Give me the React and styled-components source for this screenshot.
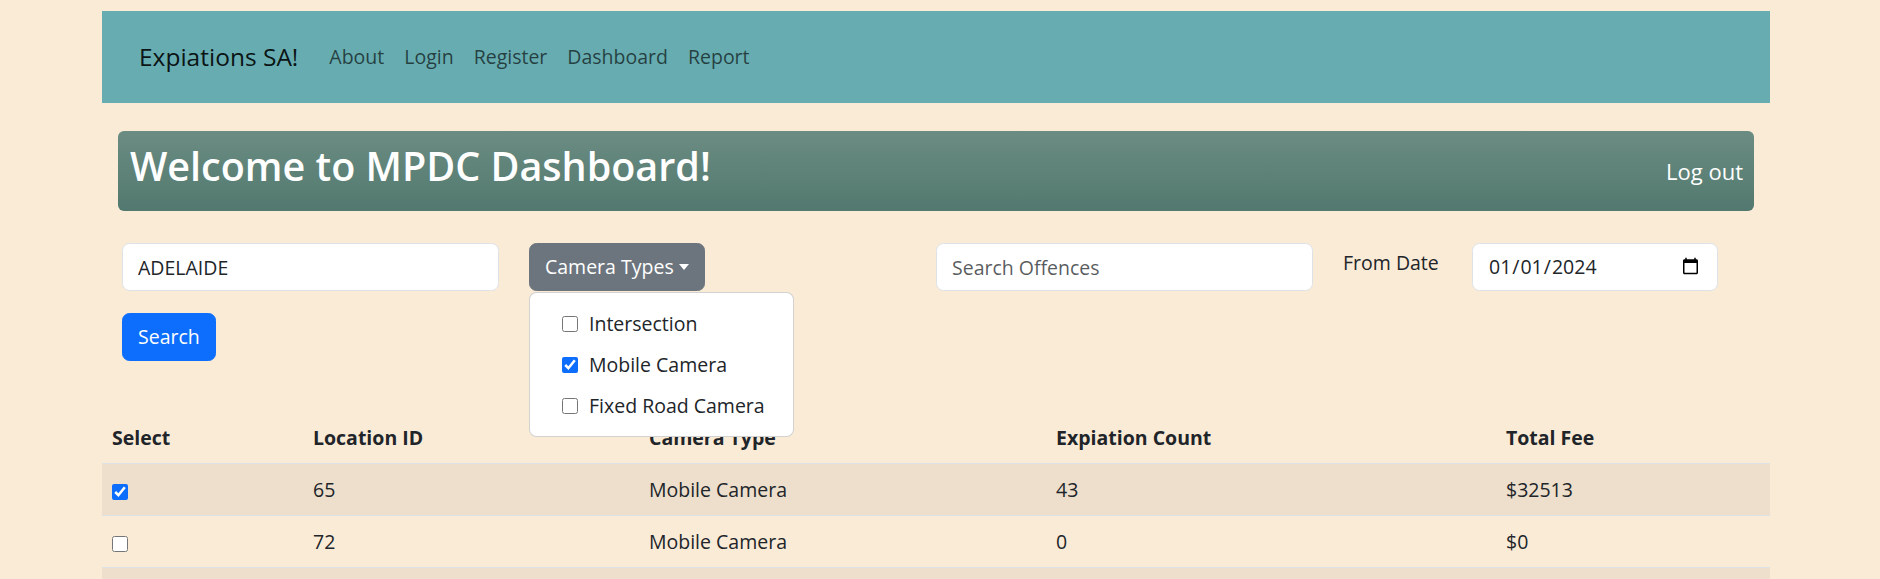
import { useState } from "react";
import styled, { createGlobalStyle } from "styled-components";

const GlobalStyle = createGlobalStyle`
  * { box-sizing: border-box; }
  body {
    margin: 0;
    background: #faebd7;
    color: #212529;
    font-family: "Segoe UI", "Open Sans", sans-serif;
    font-size: 19.5px;
    line-height: 30px;
  }
`;

const Page = styled.div`
  width: 1668px;
  margin-left: 102px;
  padding-top: 11px;
`;

const Navbar = styled.nav`
  height: 92px;
  background: #66acb0;
  display: flex;
  align-items: center;
  padding-left: 37px;
`;

const Brand = styled.a`
  font-size: 24.5px;
  color: rgba(0, 0, 0, 0.9);
  margin-right: 21px;
  text-decoration: none;
`;

const NavList = styled.ul`
  list-style: none;
  margin: 0;
  padding: 0;
  display: flex;
`;

const NavLink = styled.a`
  display: block;
  padding: 10px;
  color: rgba(0, 0, 0, 0.65);
  text-decoration: none;
`;

const Banner = styled.header`
  margin: 28px 16px 0;
  height: 80px;
  border-radius: 6px;
  background: linear-gradient(#6b8c82, #52796f);
  display: flex;
  align-items: center;
  justify-content: space-between;
  padding: 0 11px 0 12px;
  color: #fff;
`;

const Title = styled.h1`
  margin: 0 0 8px;
  font-size: 39.5px;
  font-weight: 600;
  line-height: 1.2;
`;

const LogOut = styled.button`
  background: none;
  border: 0;
  padding: 0;
  color: #fff;
  font: inherit;
  font-size: 22px;
  cursor: pointer;
`;

const Filters = styled.section`
  margin-top: 32px;
  padding-left: 20px;
  display: grid;
  grid-template-columns: repeat(4, 377px);
  column-gap: 30px;
  align-items: start;
`;

const Field = styled.div`
  display: flex;
  flex-direction: column;
  align-items: flex-start;
  gap: 22px;
`;

const TextInput = styled.input`
  width: ${(p) => p.$w || "100%"};
  height: 48px;
  padding: 0 15px;
  border: 1px solid #dee2e6;
  border-radius: 7.5px;
  background: #fff;
  color: #212529;
  font: inherit;
  &::placeholder {
    color: rgba(33, 37, 41, 0.75);
  }
`;

const Button = styled.button`
  height: 48px;
  padding: 0 15px;
  display: inline-flex;
  align-items: center;
  border: 1px solid ${(p) => p.$bg};
  border-radius: 7.5px;
  background: ${(p) => p.$bg};
  color: #fff;
  font: inherit;
  cursor: pointer;
`;

const Caret = styled.span`
  margin-left: 5px;
  border-top: 6px solid #fff;
  border-left: 5.5px solid transparent;
  border-right: 5.5px solid transparent;
`;

const Dropdown = styled.div`
  position: relative;
`;

const Menu = styled.ul`
  position: absolute;
  top: calc(100% + 1px);
  left: 0;
  z-index: 10;
  width: 265px;
  margin: 0;
  padding: 10px 0;
  list-style: none;
  background: #fff;
  border: 1px solid rgba(0, 0, 0, 0.175);
  border-radius: 7.5px;
`;

const MenuItem = styled.label`
  display: flex;
  align-items: center;
  padding: 5.5px 20px 5.5px 32px;
  line-height: 30px;
  cursor: pointer;
`;

const Check = styled.input.attrs({ type: "checkbox" })`
  width: 16px;
  height: 16px;
  margin: 0 ${(p) => p.$gap || 0}px 0 0;
  accent-color: #0d6efd;
  vertical-align: middle;
`;

const DateGroup = styled.div`
  display: flex;
  align-items: flex-start;
`;

const DateLabel = styled.label`
  width: 129px;
  margin-top: 5px;
`;

const Table = styled.table`
  width: 100%;
  margin-top: 51px;
  border-collapse: collapse;
  table-layout: fixed;
`;

const Col = styled.col`
  width: ${(p) => p.$w}px;
`;

const Th = styled.th`
  padding: 10px;
  line-height: 31px;
  text-align: left;
  font-weight: 700;
  border-bottom: 1px solid #dee2e6;
`;

const Row = styled.tr`
  &:nth-child(odd) td {
    background: rgba(0, 0, 0, 0.05);
  }
`;

const Td = styled.td`
  padding: 10px;
  line-height: 31px;
  border-bottom: 1px solid #dee2e6;
`;

const cameraTypes = [
  { name: "Intersection", checked: false },
  { name: "Mobile Camera", checked: true },
  { name: "Fixed Road Camera", checked: false },
];

const rows = [
  { id: 65, type: "Mobile Camera", count: 43, fee: 32513, selected: true },
  { id: 72, type: "Mobile Camera", count: 0, fee: 0, selected: false },
  { id: 88, type: "Mobile Camera", count: 12, fee: 9120, selected: false },
];

const App = () => {
  const [types, setTypes] = useState(cameraTypes);
  const [data, setData] = useState(rows);

  const toggleType = (i) =>
    setTypes(types.map((t, j) => (j === i ? { ...t, checked: !t.checked } : t)));
  const toggleRow = (i) =>
    setData(data.map((r, j) => (j === i ? { ...r, selected: !r.selected } : r)));

  return (
    <Page>
      <GlobalStyle />
      <Navbar>
        <Brand href="#">Expiations SA!</Brand>
        <NavList>
          <li><NavLink href="#">About</NavLink></li>
          <li><NavLink href="#">Login</NavLink></li>
          <li><NavLink href="#">Register</NavLink></li>
          <li><NavLink href="#">Dashboard</NavLink></li>
          <li><NavLink href="#">Report</NavLink></li>
        </NavList>
      </Navbar>

      <Banner>
        <Title>Welcome to MPDC Dashboard!</Title>
        <LogOut>Log out</LogOut>
      </Banner>

      <Filters>
        <Field>
          <TextInput defaultValue="ADELAIDE" />
          <Button $bg="#0d6efd">Search</Button>
        </Field>
        <Dropdown>
          <Button $bg="#6c757d">
            Camera Types
            <Caret />
          </Button>
          <Menu>
            {types.map((t, i) => (
              <li key={t.name}>
                <MenuItem>
                  <Check $gap={11} checked={t.checked} onChange={() => toggleType(i)} />
                  {t.name}
                </MenuItem>
              </li>
            ))}
          </Menu>
        </Dropdown>
        <Field>
          <TextInput placeholder="Search Offences" />
        </Field>
        <DateGroup>
          <DateLabel>From Date</DateLabel>
          <TextInput type="date" $w="246px" defaultValue="2024-01-01" />
        </DateGroup>
      </Filters>

      <Table>
        <colgroup>
          <Col $w={201} />
          <Col $w={336} />
          <Col $w={407} />
          <Col $w={450} />
          <Col $w={274} />
        </colgroup>
        <thead>
          <tr>
            <Th>Select</Th>
            <Th>Location ID</Th>
            <Th>Camera Type</Th>
            <Th>Expiation Count</Th>
            <Th>Total Fee</Th>
          </tr>
        </thead>
        <tbody>
          {data.map((r, i) => (
            <Row key={r.id}>
              <Td>
                <Check checked={r.selected} onChange={() => toggleRow(i)} />
              </Td>
              <Td>{r.id}</Td>
              <Td>{r.type}</Td>
              <Td>{r.count}</Td>
              <Td>${r.fee}</Td>
            </Row>
          ))}
        </tbody>
      </Table>
    </Page>
  );
};

export default App;
